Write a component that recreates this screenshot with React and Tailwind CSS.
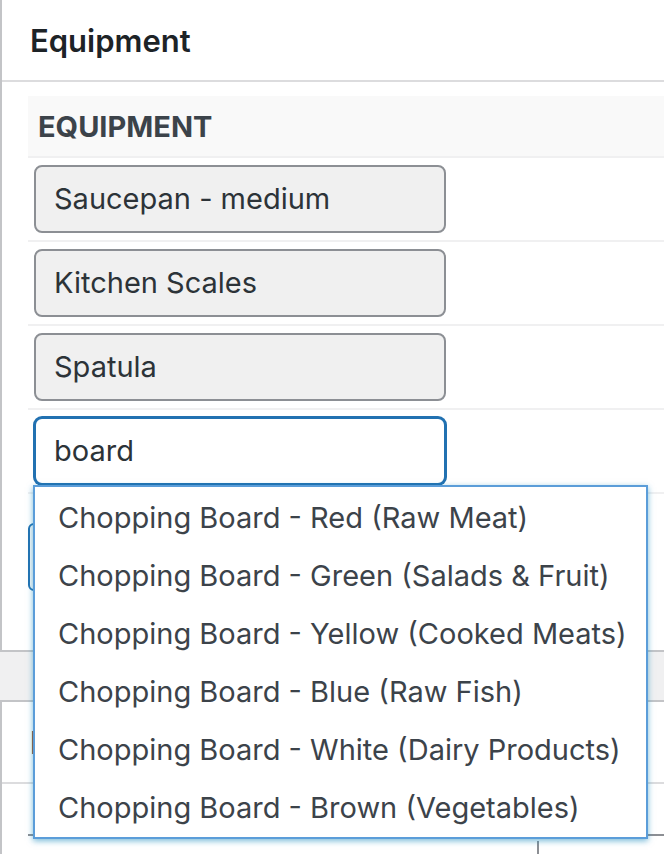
const rows = ["Saucepan - medium", "Kitchen Scales", "Spatula"];

const matches = [
  "Chopping Board - Red (Raw Meat)",
  "Chopping Board - Green (Salads & Fruit)",
  "Chopping Board - Yellow (Cooked Meats)",
  "Chopping Board - Blue (Raw Fish)",
  "Chopping Board - White (Dairy Products)",
  "Chopping Board - Brown (Vegetables)",
];

export default function App() {
  return (
    <div className="h-[854px] w-[664px] overflow-hidden bg-[#f0f0f1] font-['Inter',sans-serif]">
      {/* equipment box */}
      <div className="w-[700px] border-b-2 border-l-2 border-[#c3c4c7] bg-white">
        <div className="flex h-[82px] items-center border-b-2 border-[#dcdcde] pl-[28px]">
          <h2 className="pt-[2px] text-[31px] font-semibold text-[#1d2327]">Equipment</h2>
        </div>

        <div className="pl-[26px] pt-[14px] pb-[55px]">
          <div className="relative">
            <div className="flex h-[62px] items-center border-b-2 border-[#f0f0f1] bg-[#f9f9f9] pl-[10px]">
              <span className="pt-[2px] text-[29px] font-bold uppercase text-[#3c434a]">Equipment</span>
            </div>

            {rows.map((r) => (
              <div key={r} className="h-[84px] border-b-2 border-[#f0f0f1] pl-[6px] pt-[7px]">
                <div className="flex h-[68px] w-[412px] items-center rounded-[8px] border-2 border-[#8c8f94] bg-[#f0f0f0] pl-[18px] text-[29px] text-[#2c3338]">
                  {r}
                </div>
              </div>
            ))}

            <div className="h-[84px] border-b-2 border-[#f0f0f1] pl-[6px] pt-[7px]">
              <div className="flex h-[68px] w-[412px] items-center rounded-[8px] border-2 border-[#2271b1] bg-white pl-[18px] text-[29px] text-[#2c3338] shadow-[0_0_0_1px_#2271b1]">
                board
              </div>
            </div>

            <div className="pt-[29px]">
              <button className="h-[68px] w-[200px] rounded-[6px] border-2 border-[#2271b1] bg-[#f6f7f7]" aria-label="Add equipment" />
            </div>

            {/* autocomplete menu */}
            <ul className="absolute left-[5px] top-[389px] z-10 w-[615px] border-2 border-[#5b9dd9] bg-white py-[1px] shadow-[0_2px_6px_rgba(30,140,190,0.6)]">
              {matches.map((m) => (
                <li key={m} className="flex h-[58px] items-center pl-[23px] pt-[2px] text-[29px] text-[#3c434a]">
                  {m}
                </li>
              ))}
            </ul>
          </div>
        </div>
      </div>

      <div className="h-[48px]" />

      {/* next box, mostly under the menu */}
      <div className="w-[700px] border-l-2 border-t-2 border-[#c3c4c7] bg-white">
        <div className="flex h-[82px] items-center border-b-2 border-[#dcdcde] pl-[28px]">
          <h2 className="pt-[2px] text-[31px] font-semibold text-[#1d2327]">Instructions</h2>
        </div>
        <div className="pl-[26px] pt-[50px]">
          <div className="flex h-[60px] border-t-2 border-[#8c8f94] pt-[5px]">
            <div className="w-[509px]" />
            <div className="flex-1 border-l-2 border-[#8c8f94]" />
          </div>
        </div>
      </div>
    </div>
  );
}
